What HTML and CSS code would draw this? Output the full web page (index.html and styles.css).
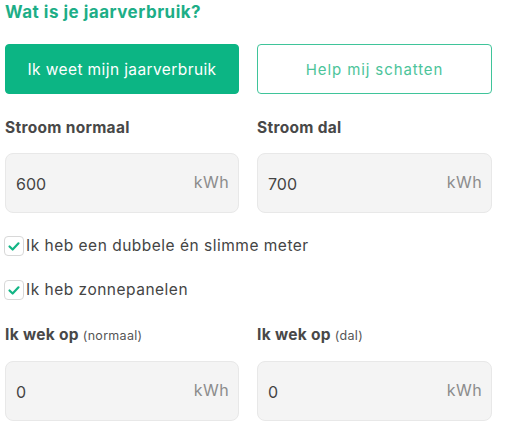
FILE: index.html
```html
<!DOCTYPE html>
<html lang="nl">
<head>
<meta charset="utf-8">
<link rel="stylesheet" href="styles.css">
</head>
<body>
<div class="form">
  <h2 class="title">Wat is je jaarverbruik?</h2>
  <div class="grid buttons">
    <button class="btn btn-primary">Ik weet mijn jaarverbruik</button>
    <button class="btn btn-outline">Help mij schatten</button>
  </div>
  <div class="grid fields">
    <div class="field">
      <div class="label">Stroom normaal</div>
      <div class="input"><span class="value">600</span><span class="unit">kWh</span></div>
    </div>
    <div class="field">
      <div class="label">Stroom dal</div>
      <div class="input"><span class="value">700</span><span class="unit">kWh</span></div>
    </div>
  </div>
  <div class="checks">
    <label class="check"><span class="box"><svg viewBox="0 0 20 20" width="20" height="20"><path d="M5 10.5 L8.5 14 L15 7" fill="none" stroke="#12b585" stroke-width="2.4" stroke-linecap="round" stroke-linejoin="round"/></svg></span>Ik heb een dubbele én slimme meter</label>
    <label class="check"><span class="box"><svg viewBox="0 0 20 20" width="20" height="20"><path d="M5 10.5 L8.5 14 L15 7" fill="none" stroke="#12b585" stroke-width="2.4" stroke-linecap="round" stroke-linejoin="round"/></svg></span>Ik heb zonnepanelen</label>
  </div>
  <div class="grid fields fields-last">
    <div class="field">
      <div class="label">Ik wek op <span class="sub">(normaal)</span></div>
      <div class="input"><span class="value">0</span><span class="unit">kWh</span></div>
    </div>
    <div class="field">
      <div class="label">Ik wek op <span class="sub">(dal)</span></div>
      <div class="input"><span class="value">0</span><span class="unit">kWh</span></div>
    </div>
  </div>
</div>
</body>
</html>
```

FILE: styles.css
```css
html, body {
  margin: 0;
  padding: 0;
  background: #ffffff;
}
body {
  font-family: Inter, "Open Sans", sans-serif;
  color: #474747;
}
.form {
  width: 487px;
  padding: 0 0 0 5px;
}
.title {
  margin: 0;
  padding-top: 1px;
  font-size: 17px;
  font-weight: 700;
  letter-spacing: 0.5px;
  line-height: 22px;
  color: #1dae87;
}
.grid {
  display: grid;
  grid-template-columns: 234px 235px;
  column-gap: 18px;
}
.buttons {
  margin-top: 21px;
}
.btn {
  height: 50px;
  border-radius: 4px;
  font-family: inherit;
  font-size: 15.5px;
  letter-spacing: 0.4px;
  cursor: pointer;
}
.btn-primary {
  background: #0cb584;
  border: 1px solid #0cb584;
  color: #ffffff;
}
.btn-outline {
  background: #ffffff;
  border: 1.5px solid #3fc49a;
  color: #4cc49a;
  font-size: 15px;
  letter-spacing: 0.9px;
}
.fields {
  margin-top: 23px;
}
.label {
  font-size: 15.5px;
  font-weight: 700;
  letter-spacing: 0.3px;
  line-height: 22px;
  color: #484848;
}
.sub {
  font-size: 12.5px;
  font-weight: 400;
  letter-spacing: 0.3px;
  color: #555;
}
.input {
  margin-top: 14px;
  height: 58px;
  border: 1px solid #e8e8e8;
  border-radius: 8px;
  background: #f4f4f4;
  display: flex;
  align-items: center;
  justify-content: space-between;
  padding: 0 9px 0 10px;
}
.value {
  font-size: 16px;
  color: #444;
  padding-top: 2px;
}
.unit {
  font-size: 16px;
  letter-spacing: 0.4px;
  color: #8c8c8c;
  padding-bottom: 2px;
}
.checks {
  margin-top: 21px;
  display: flex;
  flex-direction: column;
  gap: 20px;
}
.check {
  display: flex;
  align-items: center;
  gap: 2px;
  font-size: 15.5px;
  letter-spacing: 0.5px;
  line-height: 24px;
  color: #444;
}
.box {
  width: 20px;
  height: 20px;
  box-sizing: border-box;
  border: 1px solid #d8d8d8;
  border-radius: 4px;
  background: #fff;
  display: flex;
  align-items: center;
  justify-content: center;
  margin-left: -1px;
}
.box svg {
  display: block;
  width: 18px;
  height: 18px;
}
.fields-last {
  margin-top: 22px;
}
```
